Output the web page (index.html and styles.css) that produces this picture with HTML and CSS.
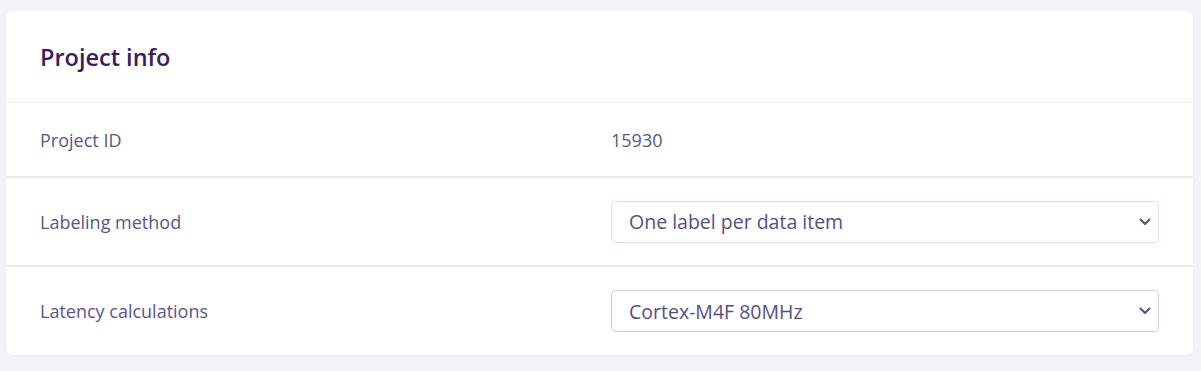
FILE: index.html
```html
<!DOCTYPE html>
<html>
<head>
<meta charset="utf-8">
<link rel="stylesheet" href="styles.css">
</head>
<body>
<div class="card">
  <div class="card-header">
    <h2 class="title">Project info</h2>
  </div>
  <div class="row row-first">
    <div class="label">Project ID</div>
    <div class="value">15930</div>
  </div>
  <div class="row">
    <div class="label">Labeling method</div>
    <div class="select select-focus">
      <span>One label per data item</span>
      <svg class="chev" width="12" height="8" viewBox="0 0 12 8"><path d="M1.5 1.5 L6 6 L10.5 1.5" fill="none" stroke="#56507f" stroke-width="2" stroke-linecap="round" stroke-linejoin="round"/></svg>
    </div>
  </div>
  <div class="row row-last">
    <div class="label">Latency calculations</div>
    <div class="select">
      <span>Cortex-M4F 80MHz</span>
      <svg class="chev" width="12" height="8" viewBox="0 0 12 8"><path d="M1.5 1.5 L6 6 L10.5 1.5" fill="none" stroke="#56507f" stroke-width="2" stroke-linecap="round" stroke-linejoin="round"/></svg>
    </div>
  </div>
</div>
</body>
</html>
```
FILE: styles.css
```css
html, body {
  margin: 0;
  padding: 0;
  background: #f2f2f8;
}
body {
  padding: 11px 8px 17px 6px;
  font-family: "Open Sans", "Noto Sans", sans-serif;
}
.card {
  background: #ffffff;
  border-radius: 7px;
  box-shadow: 0 1px 3px rgba(60, 50, 120, 0.04);
  overflow: hidden;
}
.card-header {
  height: 92px;
  display: flex;
  align-items: center;
  padding: 0 34px;
  border-bottom: 1px solid #f0f0f4;
  box-sizing: border-box;
}
.title {
  margin: 0;
  font-size: 23.5px;
  font-weight: 600;
  color: #3b1c63;
  line-height: 1;
  padding-top: 3px;
}
.row {
  display: grid;
  grid-template-columns: 571px 1fr;
  align-items: center;
  padding: 0 34px;
  height: 87px;
  border-top: 2px solid #e9e9ef;
}
.row-first {
  border-top: none;
  height: 73px;
}
.row-last {
  height: 88px;
}
.label {
  font-size: 18px;
  color: #5b5684;
}
.value {
  font-size: 18px;
  color: #5b5684;
}
.select {
  height: 42px;
  box-sizing: border-box;
  border: 1px solid #cdcdd8;
  border-radius: 5px;
  display: flex;
  align-items: center;
  justify-content: space-between;
  padding: 0 7px 0 17px;
  font-size: 19.5px;
  color: #565081;
}
.select-focus {
  border-color: #cfe4f7;
}
.chev {
  display: block;
}
```
